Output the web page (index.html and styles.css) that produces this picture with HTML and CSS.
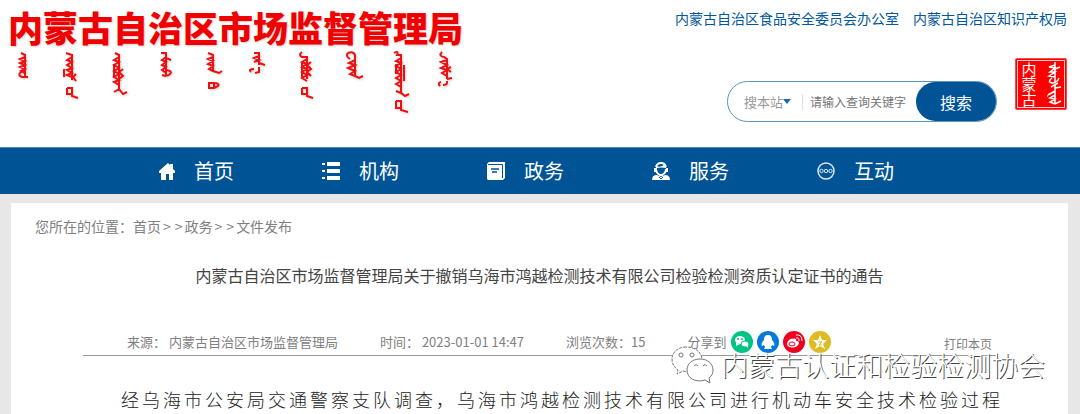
FILE: index.html
```html
<!DOCTYPE html>
<html lang="zh-CN">
<head>
<meta charset="utf-8"/>
<meta name="viewport" content="width=device-width,initial-scale=1.0"/>
    <title>内蒙古自治区市场监督管理局</title>

    <link rel="stylesheet" href="styles.css">
</head>
<body>
<header id="header">
    <div class="logo">
        <h1>内蒙古自治区市场监督管理局</h1>
        <svg class="mongol" width="456" height="68" viewBox="0 0 456 68" aria-hidden="true">
            <path d="M13 3l4 2M17 4v22M17 7l-5 2 5 2-5 2 5 2-5 2 5 2-4 2 4 2M13 22q-4 3 1 5h6"/>
            <path d="M58 3l6 2M64 4v26M64 7l-5 3 5 2-5 3 5 3-5 2 5 3-5 2 5 2M56 19v8M68 24l-3 3 3 4M59 38h5v8l6 2M59 38v6h5"/>
            <path d="M107 3l4 2M111 4v37M111 7l-5 3 5 2-5 3 5 3-5 3 5 3-5 3 5 3-5 2 5 3M106 14v14M115 19l-4 3 4 4-4 3M106 42l5-3 4 5 4-2"/>
            <path d="M153 3h5v22M158 7l-4 3 4 2-4 3 4 2-4 3 4 3M158 8l5 2M158 20q7 1 4 4t-8 1"/>
            <path d="M200 3l5 2v17M205 7l-5 2 5 2-5 3 5 2-4 3 4 2 6 2 3-2M201 33h5v5h-5zM206 33q6 0 4 3l-4 2"/>
            <path d="M246 3h5v12M251 6l-5 2 5 2-5 2M251 13l6 2M246 19q-6 0-3 3M251 17v5l-4 1"/>
            <path d="M294 2q-4 3 0 5h5v22M299 9l-5 3 5 2-5 3 5 2-5 3 5 3-5 3 5 3M294 13v14M303 12l-4 3 4 4-4 3 4 4M294 38h5v8l6 2M294 38v6h5"/>
            <path d="M340 3q5-2 7 2v20M340 3q-3 3 2 6M347 10l-6 3 6 2-7 3 7 3-5 3 5 2 4 2 4-2"/>
            <path d="M386 3q5-3 3 2h4v38M393 8l-5 3 5 2-5 3 5 3-5 3 5 3-5 3 5 3-5 3 5 3M388 14v10M396 15v16M388 41l5 2 4 3 4-2M388 51h5v9l7 2M388 51v7h5"/>
            <path d="M434 2q-4 4 2 5l3 2v20M439 10l-6 2 6 3-6 3 6 2-5 3 5 3M443 17l-4 2 4 3M439 29l5-1M433 32q-4 1-1 4M439 31q1 4-4 4"/>
        </svg>
    </div>

    <div class="head_right">
        <div class="top_links">
            <a href="#">内蒙古自治区食品安全委员会办公室</a>
            <a href="#">内蒙古自治区知识产权局</a>
        </div>
        <div class="head_tools">
            <form class="search">
                <select aria-label="搜索范围"><option>搜本站</option></select>
                <input type="text" placeholder="请输入查询关键字" aria-label="关键字">
                <button type="button">搜索</button>
            </form>
            <div class="seal">
                <span>内蒙古</span>
                <svg width="20" height="46" viewBox="0 0 20 46" aria-hidden="true">
                    <path d="M11 1v21M11 4l-6 2 6 1-5 4 5 0-6 4 6 1M11 8l5-2M8 17q-5 4 0 5 5 0 7-5M14 22l-7 4M11 24v19M17 26l-6 1M11 30l-7 4M3 35h1M11 34l-5 3 5 1-5 3 5 2 6-3"/>
                </svg>
            </div>
        </div>
    </div>
</header><!-- header -->

<nav id="nav">
    <a href="#">
        <svg viewBox="0 0 18 18"><path fill="#fff" d="M11 1 2 9v2h2v7h5v-6h3v6h4v-7h2V9l-2-2V2h-3v1z"/></svg>
        首页
    </a>
    <a href="#">
        <svg viewBox="0 0 18 18"><path fill="#fff" d="M0 1h3v2H0zM5 0h13v4H5zM0 8h3v2H0zM5 7h13v4H5zM0 15h3v2H0zM5 14h13v4H5z"/></svg>
        机构
    </a>
    <a href="#">
        <svg viewBox="0 0 18 18"><path fill="#fff" d="M2 0h16v16l-2 2H1l-1-1V2z"/><path fill="none" stroke="#005496" stroke-width="1" d="M1 2.500h14.500V16"/><path fill="none" stroke="#005496" stroke-width="1.500" d="M4 7h8M5 10h5"/></svg>
        政务
    </a>
    <a href="#">
        <svg viewBox="0 0 18 18"><path fill="none" stroke="#fff" stroke-width="2" d="M4 5q1-4 5-4t5 4M14 7q0 4-4 6H8Q4 11 4 7"/><path fill="#fff" d="M4 4q5 2 9-2l1 4h2v4h-2V6q-5-1-9 0v4H2V6h2zM0 18q0-5 5-5l4 2 4-2q5 0 5 5z"/><path fill="none" stroke="#005496" d="M7 15l2 2 2-2"/></svg>
        服务
    </a>
    <a href="#">
        <svg viewBox="0 0 18 18"><g fill="none" stroke="#dbe8f3"><circle cx="9" cy="9" r="8" stroke-width="1.5"/><circle cx="4.500" cy="9" r="1.700"/><circle cx="9" cy="9" r="1.700"/><circle cx="13.500" cy="9" r="1.700"/></g></svg>
        互动
    </a>
</nav><!-- nav -->

<main id="main">
    <div class="crumb">您所在的位置<i>：</i><a href="#">首页</a><span>&gt;</span><span>&gt;</span><a href="#">政务</a><span>&gt;</span><span>&gt;</span><a href="#">文件发布</a></div>

    <article class="cont">
        <h2>内蒙古自治区市场监督管理局关于撤销乌海市鸿越检测技术有限公司检验检测资质认定证书的通告</h2>

        <div class="info">
            <span>来源<i>：</i> 内蒙古自治区市场监督管理局</span>
            <span>时间<i>：</i> 2023-01-01 14:47</span>
            <span>浏览次数<i>：</i>15</span>
            <div class="share">
                分享到
                <a href="#" class="wechat" aria-label="微信"><svg viewBox="0 0 22 22"><ellipse cx="9" cy="9" rx="5" ry="4"/><path d="M5 11l0 4 4-2z"/><ellipse cx="14" cy="13" rx="4" ry="3" stroke="#00c483"/><path d="M15 15l2 2v-3z"/><g fill="#00c483"><circle cx="7" cy="8" r="1"/><circle cx="11" cy="8" r="1"/></g></svg></a>
                <a href="#" class="qq" aria-label="QQ"><svg viewBox="0 0 22 22"><path d="M11 4c-3 0-4 2-4 5-2 2-3 4-2 6l2-1 1 2-1 2h8l-1-2 1-2 2 1c1-2 0-4-2-6 0-3-1-5-4-5z"/></svg></a>
                <a href="#" class="weibo" aria-label="微博"><svg viewBox="0 0 22 22"><path d="M10 8c2-1 4 0 3 2 3 0 4 2 2 4-3 4-11 3-11-1 0-3 5-7 6-5z"/><ellipse cx="9" cy="13" rx="3" ry="2" fill="none" stroke="#f0001e"/><path d="M13 7q3-1 3 3M13 4q6-1 6 6" fill="none" stroke="#fff"/></svg></a>
                <a href="#" class="qzone" aria-label="QQ空间"><svg viewBox="0 0 22 22"><path d="M11 4l2 5 5 0-4 4 2 5-5-3-5 3 2-5-4-4 5 0z"/><path d="M9 11h4l-3 3h3" fill="none" stroke="#debb24"/></svg></a>
            </div>
            <a href="#" class="print">打印本页</a>
        </div>

        <p>经乌海市公安局交通警察支队调查，乌海市鸿越检测技术有限公司进行机动车安全技术检验过程</p>
    </article><!-- cont -->

    <div class="watermark">
        <svg width="44" height="38" viewBox="0 0 44 38" aria-hidden="true">
            <g fill="#fff" stroke="#777" stroke-width="1">
                <path d="M15 1C6 1 1 7 1 13c0 5 2 8 6 11l-1 4 6-3c14 3 19-3 19-11C31 6 24 1 15 1z" stroke-dasharray="3 1"/>
                <circle cx="10" cy="9" r="2"/><circle cx="21" cy="9" r="2"/>
                <path d="M29 13c-8 0-13 5-13 11 0 8 8 13 18 10l5 3-1-5c3-2 4-5 4-8 0-6-5-11-13-11z"/>
                <path fill="none" d="M23 20q2-3 4 0M32 20q2-3 4 0"/>
            </g>
        </svg>
        <span>内蒙古认证和检验检测协会</span>
    </div>
</main><!-- main -->
</body>
</html>
```
FILE: styles.css
```css
*{margin:0;padding:0;box-sizing:border-box;}
a{color:inherit;text-decoration:none;}
body{
    background:#e7e7e7;
    font-family:"Noto Sans CJK SC",sans-serif;
    font-size:14px;color:#808080;}
button,input,select{font-family:inherit;}
/* 冒号居中 */
i{font-family:"Noto Sans CJK TC",sans-serif;font-style:normal;}

/* header */
#header{
    display:flex;justify-content:space-between;
    min-height:147px;
    padding:8px 13px 0 8px;
    background:#fff;}

.logo h1{
    font-size:35px;line-height:38px;font-weight:900;
    color:#f00000;
    text-shadow:1px 1px 2px #ccc;
    white-space:nowrap;}

.mongol{
    display:block;
    margin-top:4px;
    fill:none;stroke:#ee1010;stroke-width:2;
    filter:drop-shadow(1px 1px 1px #ccc);}

.top_links{
    display:flex;justify-content:flex-end;
    gap:14px;
    line-height:20px;
    color:#00579b;}

.head_tools{
    display:flex;justify-content:flex-end;
    gap:18px;
    margin-top:30px;}

.search{
    display:flex;align-items:center;
    position:relative;
    width:270px;height:41px;
    margin-top:23px;
    padding-left:16px;
    border:1px solid #5c93c0;border-radius:21px;}

.search::before{
    content:"";
    position:absolute;
    left:55px;top:17px;
    border:4px solid transparent;
    border-top:5px solid #1d6aa5;
    pointer-events:none;}

.search select{
    appearance:none;
    width:48px;height:20px;
    border:0;
    background:none;
    font-size:13px;color:#999;}

.search input{
    flex:1;
    min-width:0;height:16px;
    margin-left:10px;padding-left:7px;
    border:0;border-left:1px solid #ddd;
    background:none;
    font-size:12px;}
.search input::placeholder{color:#757575;}

.search button{
    width:80px;height:39px;
    border:0;border-radius:20px;
    background:#005496;
    font-size:16px;color:#fff;}

.seal{
    display:flex;justify-content:space-around;align-items:center;
    width:52px;height:52px;
    background:#f00;
    border:1px solid #f44;border-radius:2px;
    outline:1px solid #fcc;outline-offset:-3px;
    color:#fff;}
.seal span{
    writing-mode:vertical-rl;
    font-size:15px;line-height:20px;}
.seal svg{fill:none;stroke:#fff;stroke-width:1.5;}

/* nav */
#nav{
    display:grid;grid-template-columns:repeat(5,1fr);
    padding:0 98px 0 157px;
    background:#005496;
    border-top:1px solid #4484b6;
    font-size:20px;line-height:46px;color:#fff;}
#nav a{display:flex;align-items:center;gap:19px;}
#nav svg{width:18px;height:18px;}

/* main */
#main{
    position:relative;
    margin:9px 12px 0 11px;
    background:#fff;}

.crumb{
    padding:12px 24px 0;
    line-height:22px;}
.crumb span{padding:0 2px;}

.cont{padding:0 72px;}
.cont h2{
    margin-top:26px;
    font-size:16px;line-height:24px;font-weight:400;
    text-align:center;color:#444;}

.info{
    display:flex;align-items:center;
    gap:42px;
    height:28px;
    margin-top:41px;padding:0 4px 0 44px;
    border-bottom:1px solid #999;
    font-size:13px;white-space:nowrap;}

.share{display:flex;align-items:center;gap:4px;}
.share a{
    width:22px;height:22px;
    border-radius:50%;}
.share svg{display:block;fill:#fff;}
.wechat{background:#00c483;}
.qq{background:#007bdb;}
.weibo{background:#f0001e;}
.qzone{background:#debb24;}

.print{
    margin-left:auto;
    padding-top:4px;
    font-size:12px;}

.cont p{
    margin-right:-20px;
    padding:28px 0 0 38px;
    font-size:18px;line-height:30px;font-weight:300;
    letter-spacing:3px;color:#222;}

/* watermark */
.watermark{
    display:flex;align-items:center;
    gap:6px;
    position:absolute;
    right:23px;top:142px;
    font-size:27px;line-height:40px;font-weight:300;
    color:#fff;white-space:nowrap;
    text-shadow:1px 1px 0 #444;}
```
